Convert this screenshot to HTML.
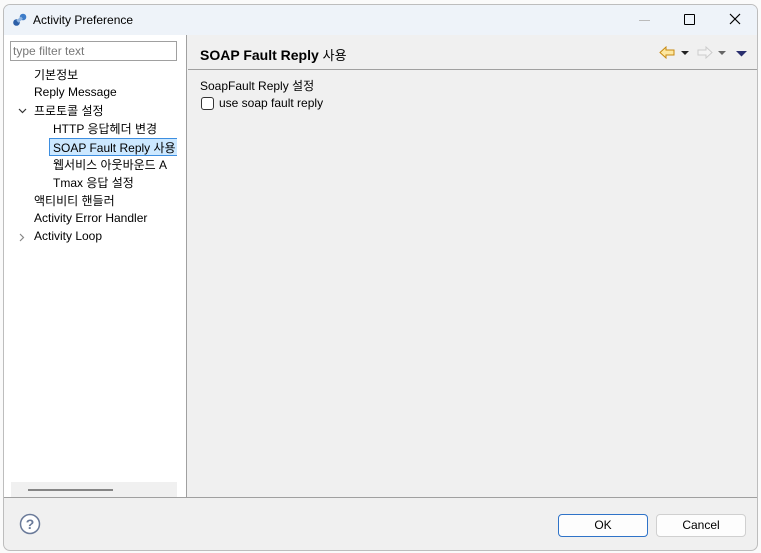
<!DOCTYPE html>
<html><head><meta charset="utf-8"><style>
*{margin:0;padding:0;box-sizing:border-box}
body{width:761px;height:553px;background:#fafafa;position:relative;overflow:hidden;font-family:"Liberation Sans","Noto Sans CJK KR",sans-serif;font-size:12px;color:#000}
.a{position:absolute}
.win{left:3px;top:4px;width:755px;height:547px;border:1px solid #bdbdbd;border-radius:7px;background:#f0f0f0;overflow:hidden}
.title{left:0;top:0;width:755px;height:30px;background:#eef3f9}
.left{left:0;top:30px;width:183px;height:462px;background:#fff;border-right:1px solid #a0a0a0}
.tree{left:0;top:0;width:173px;height:440px;overflow:hidden}
.t{position:absolute;white-space:nowrap;font-size:12px}
</style></head><body>
<div class="a win">
 <div class="a title">
  <svg class="a" style="left:8px;top:7px" width="16" height="16" viewBox="0 0 16 16"><circle cx="4.5" cy="10.5" r="3.3" fill="#2c5fa8"/><circle cx="11" cy="5" r="3.3" fill="#3d7cc9"/><rect x="5" y="6" width="6" height="3" fill="#8fb4e0" transform="rotate(-40 8 8)"/></svg>
  <div class="t" style="left:29px;top:8px">Activity Preference</div>
  <div class="a" style="left:635px;top:15px;width:11px;height:1px;background:#bbb"></div>
  <div class="a" style="left:680px;top:9px;width:11px;height:11px;border:1.3px solid #000;border-radius:1px"></div>
  <svg class="a" style="left:725px;top:8px" width="12" height="12"><path d="M1 1L11 11M11 1L1 11" stroke="#000" stroke-width="1.2"/></svg>
 </div>
 <div class="a left">
  <div class="a" style="left:6px;top:6px;width:167px;height:20px;border:1px solid #a0a0a0;background:#fff"></div>
  <div class="t" style="left:9px;top:9px;color:#777">type filter text</div>
  <div class="a tree">
  <div class="t" style="left:30px;top:31px">기본정보</div>
  <div class="t" style="left:30px;top:50px">Reply Message</div>
  <svg class="a" style="left:14px;top:73px" width="9" height="6"><path d="M1 1L4.5 4.5L8 1" stroke="#333" fill="none" stroke-width="1.2"/></svg>
  <div class="t" style="left:30px;top:67px">프로토콜 설정</div>
  <div class="t" style="left:49px;top:85px">HTTP 응답헤더 변경</div>
  <div class="a" style="left:45px;top:103px;width:140px;height:18px;background:#cce8ff;border:1px solid #3d8ee0"></div>
  <div class="t" style="left:49px;top:104px">SOAP Fault Reply 사용</div>
  <div class="t" style="left:49px;top:121px">웹서비스 아웃바운드 A</div>
  <div class="t" style="left:49px;top:139px">Tmax 응답 설정</div>
  <div class="t" style="left:30px;top:157px">액티비티 핸들러</div>
  <div class="t" style="left:30px;top:176px">Activity Error Handler</div>
  <svg class="a" style="left:15px;top:198px" width="6" height="9"><path d="M1 1L4.5 4.5L1 8" stroke="#888" fill="none" stroke-width="1.2"/></svg>
  <div class="t" style="left:30px;top:194px">Activity Loop</div>
  </div>
  <div class="a" style="left:7px;top:447px;width:166px;height:15px;background:#f0f0f0"></div>
  <div class="a" style="left:24px;top:454px;width:85px;height:2px;background:#858585"></div>
 </div>
 <div class="t" style="left:196px;top:40px;font-size:14px;font-weight:bold">SOAP Fault Reply <span style="font-weight:normal;font-size:13px">사용</span></div>
 <div class="a" style="left:184px;top:64px;width:571px;height:1px;background:#a0a0a0"></div>
 <svg class="a" style="left:655px;top:41px" width="16" height="13"><path d="M1 6.5L7 1V4H15V9H7V12Z" fill="#fde7a0" stroke="#c88a10"/></svg>
 <svg class="a" style="left:677px;top:46px" width="8" height="5"><path d="M0 0H8L4 4Z" fill="#222"/></svg>
 <svg class="a" style="left:693px;top:41px" width="16" height="13"><path d="M15 6.5L9 1V4H1V9H9V12Z" fill="#f4f4f4" stroke="#ccc"/></svg>
 <svg class="a" style="left:714px;top:46px" width="8" height="5"><path d="M0 0H8L4 4Z" fill="#666"/></svg>
 <svg class="a" style="left:732px;top:46px" width="11" height="6"><path d="M0 0H11L5.5 5.5Z" fill="#2a2f6e"/></svg>
 <div class="t" style="left:196px;top:72px">SoapFault Reply 설정</div>
 <div class="a" style="left:197px;top:92px;width:13px;height:13px;border:1px solid #333;border-radius:3px;background:#fff"></div>
 <div class="t" style="left:215px;top:91px">use soap fault reply</div>
 <div class="a" style="left:0;top:492px;width:755px;height:1px;background:#a0a0a0"></div>
 <svg class="a" style="left:15px;top:508px" width="22" height="22"><circle cx="11" cy="11" r="9.5" fill="#fff" stroke="#6a7a99" stroke-width="1.5"/><text x="11" y="16" text-anchor="middle" font-family="Liberation Sans" font-weight="bold" font-size="14" fill="#6a7a99">?</text></svg>
 <div class="a" style="left:554px;top:509px;width:90px;height:23px;border:1px solid #2f73c8;border-radius:4px;background:#fdfdfd"></div>
 <div class="t" style="left:554px;top:513px;width:90px;text-align:center">OK</div>
 <div class="a" style="left:652px;top:509px;width:90px;height:23px;border:1px solid #d0d0d0;border-radius:4px;background:#fdfdfd"></div>
 <div class="t" style="left:652px;top:513px;width:90px;text-align:center">Cancel</div>
</div>
</body></html>
